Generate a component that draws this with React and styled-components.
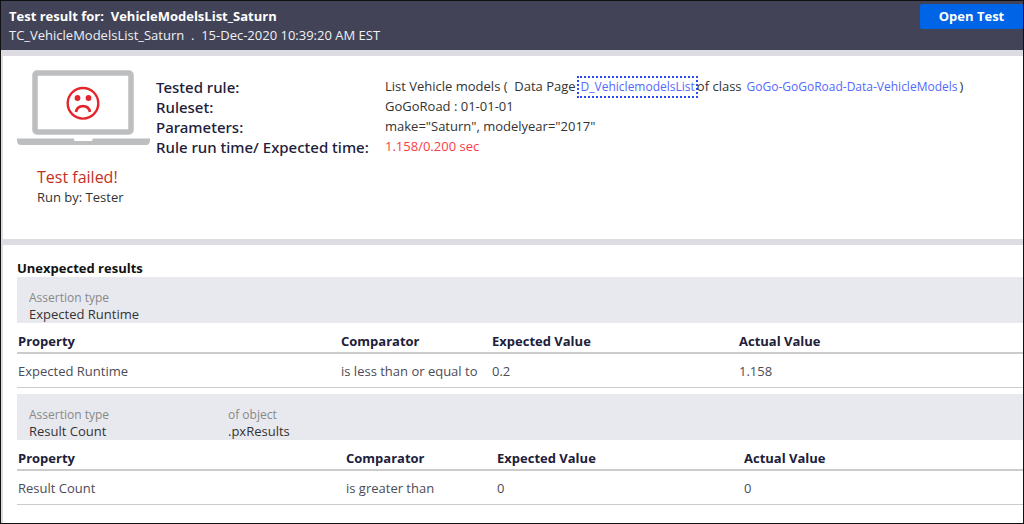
import styled, { createGlobalStyle } from "styled-components"

const ASSERTIONS = [
    {
        id: 1,
        info: [{ label: "Assertion type", value: "Expected Runtime" }],
        firstWidth: 323,
        rows: [["Expected Runtime", "is less than or equal to", "0.2", "1.158"]],
    },
    {
        id: 2,
        info: [
            { label: "Assertion type", value: "Result Count" },
            { label: "of object", value: ".pxResults" },
        ],
        firstWidth: 328,
        rows: [["Result Count", "is greater than", "0", "0"]],
    },
];

const COLUMNS = ["Property", "Comparator", "Expected Value", "Actual Value"];

function FailedIcon(){
    return (
        <svg width="134" height="75" viewBox="0 0 134 75" aria-hidden="true">
            <rect x="18" y="3" width="96" height="59" rx="2" fill="#fff" stroke="#bcbec0" strokeWidth="5.500" />
            <path d="M0 68.500h57v1q0 1.500 1.500 1.500h15.500q1.500 0 1.500-1.500v-1h57.500v1.500q0 5-4 5H4q-4 0-4-5z" fill="#bcbec0" />
            <circle cx="66" cy="33.300" r="15.300" fill="none" stroke="#e3262b" strokeWidth="2.400" />
            <circle cx="60.500" cy="28" r="2.900" fill="#e3262b" />
            <circle cx="71.500" cy="28" r="2.900" fill="#e3262b" />
            <path d="M59 42c1.500-7.800 12.500-7.800 14 0" fill="none" stroke="#e3262b" strokeWidth="2.600" />
        </svg>
    )
}

function AssertionTable({ rows, firstWidth }){
    return (
        <Table>
            <colgroup>
                <Col $width={firstWidth} />
                <Col $width={151} />
                <Col $width={247} />
                <col />
            </colgroup>
            <thead>
                <tr>
                    {COLUMNS.map((name) => <HeadCell key={name} scope="col">{name}</HeadCell>)}
                </tr>
            </thead>
            <tbody>
                {rows.map((row, index) => (
                    <tr key={index}>
                        {row.map((cell, index2) => <Cell key={index2}>{cell}</Cell>)}
                    </tr>
                ))}
            </tbody>
        </Table>
    )
}

function App(){
    return (
        <>
            <GlobalStyle />
            <Page>
                <Header>
                    <div>
                        <Title>Test result for:&nbsp; VehicleModelsList_Saturn</Title>
                        <SubTitle>TC_VehicleModelsList_Saturn&nbsp; .&nbsp; 15-Dec-2020 10:39:20 AM EST</SubTitle>
                    </div>
                    <OpenButton type="button">Open Test</OpenButton>
                </Header>

                <Summary>
                    <Status>
                        <FailedIcon />
                        <StatusText>
                            <Failed>Test failed!</Failed>
                            <RunBy>Run by: Tester</RunBy>
                        </StatusText>
                    </Status>
                    <Details>
                        <Label>Tested rule:</Label>
                        <Value>
                            List Vehicle models (&nbsp; Data Page
                            <RuleLink href="#data-page" $focused>D_VehiclemodelsList</RuleLink>
                            of class
                            <RuleLink href="#class">GoGo-GoGoRoad-Data-VehicleModels</RuleLink>
                            )
                        </Value>
                        <Label>Ruleset:</Label>
                        <Value>GoGoRoad : 01-01-01</Value>
                        <Label>Parameters:</Label>
                        <Value>make="Saturn", modelyear="2017"</Value>
                        <Label>Rule run time/ Expected time:</Label>
                        <Value $error>1.158/0.200 sec</Value>
                    </Details>
                </Summary>

                <Results>
                    <SectionTitle>Unexpected results</SectionTitle>
                    {ASSERTIONS.map((item) => (
                        <Assertion key={item.id}>
                            <AssertionHead>
                                {item.info.map((field) => (
                                    <Field key={field.label}>
                                        <FieldLabel>{field.label}</FieldLabel>
                                        <FieldValue>{field.value}</FieldValue>
                                    </Field>
                                ))}
                            </AssertionHead>
                            <AssertionTable rows={item.rows} firstWidth={item.firstWidth} />
                        </Assertion>
                    ))}
                </Results>
            </Page>
        </>
    )
}
export default App

const GlobalStyle = createGlobalStyle`
    * {
        box-sizing: border-box;
    }
    body {
        margin: 0;
        background: #fff;
        color: #333;
        font-family: "Open Sans", "Noto Sans", sans-serif;
        font-size: 13px;
        line-height: 18px;
    }
`;
const Page = styled.div`
    display: flex;
    flex-direction: column;
    min-height: 100vh;
    border: 1px solid #111;
`;
const Header = styled.header`
    display: flex;
    justify-content: space-between;
    align-items: flex-start;
    padding: 3px 0 6px 8px;
    background: #424357;
    color: #fff;
`;
const Title = styled.h1`
    margin: 2px 0 0;
    font-size: 13px;
    font-weight: 700;
    line-height: 20px;
`;
const SubTitle = styled.p`
    margin: 0;
    line-height: 18px;
    color: #f0f0f4;
`;
const OpenButton = styled.button`
    width: 103px;
    height: 25px;
    padding: 0 0 2px;
    border: 0;
    border-radius: 2px;
    background: #0064e6;
    color: #fff;
    font-family: inherit;
    font-size: 13px;
    font-weight: 700;
`;
const Summary = styled.section`
    display: flex;
    align-items: flex-start;
    gap: 5px;
    min-height: 195px;
    padding: 14px 0 30px 14px;
    border: solid #dcdce2;
    border-width: 6px 0 6px 2px;
`;
const Status = styled.div`
    flex: none;
`;
const StatusText = styled.div`
    margin-top: 17px;
    padding-left: 20px;
`;
const Failed = styled.p`
    margin: 0;
    color: #c0311f;
    font-size: 16px;
    line-height: 22px;
`;
const RunBy = styled.p`
    margin: 0;
`;
const Details = styled.dl`
    display: grid;
    grid-template-columns: 229px 1fr;
    grid-auto-rows: 20px;
    margin: 6px 0 0;
`;
const Label = styled.dt`
    color: #20203a;
    font-family: "Noto Sans", "Open Sans", sans-serif;
    font-size: 15px;
    font-weight: 500;
    line-height: 22px;
    white-space: nowrap;
`;
const Value = styled.dd`
    margin: 0;
    line-height: 20px;
    white-space: nowrap;
    color: ${(props) => (props.$error ? "#fa3c46" : "#333")};
`;
const RuleLink = styled.a`
    display: inline-block;
    margin: 0 1px 0 3px;
    padding: 0 1px 0 2px;
    outline: ${(props) => (props.$focused ? "2px dotted #2b4bf2" : "none")};
    color: #5468ff;
    font-size: 12px;
    line-height: 18px;
    text-decoration: none;
`;
const Results = styled.section`
    flex: 1;
    padding: 14px 0 10px 14px;
    border-left: 2px solid #dcdce2;
`;
const SectionTitle = styled.h2`
    margin: 0;
    color: #111;
    font-size: 13px;
    font-weight: 700;
    line-height: 18px;
`;
const Assertion = styled.article`
    & + & {
        margin-top: 6px;
    }
`;
const AssertionHead = styled.div`
    display: flex;
    padding: 13px 0 0 12px;
    background: #e8e9ee;
`;
const Field = styled.div`
    width: 199px;
`;
const FieldLabel = styled.div`
    color: #888;
    font-size: 12px;
    line-height: 16px;
`;
const FieldValue = styled.div`
    line-height: 17px;
`;
const Table = styled.table`
    width: 100%;
    table-layout: fixed;
    border-collapse: separate;
    border-spacing: 0;
`;
const Col = styled.col`
    width: ${(props) => props.$width}px;
`;
const HeadCell = styled.th`
    padding: 10px 1px 2px;
    border-bottom: 2px solid #ccc;
    color: #20203a;
    font-weight: 700;
    line-height: 17px;
    text-align: left;
`;
const Cell = styled.td`
    padding: 8px 1px 7px;
    border-bottom: 1px solid #ccc;
    color: #4c4c58;
`;
